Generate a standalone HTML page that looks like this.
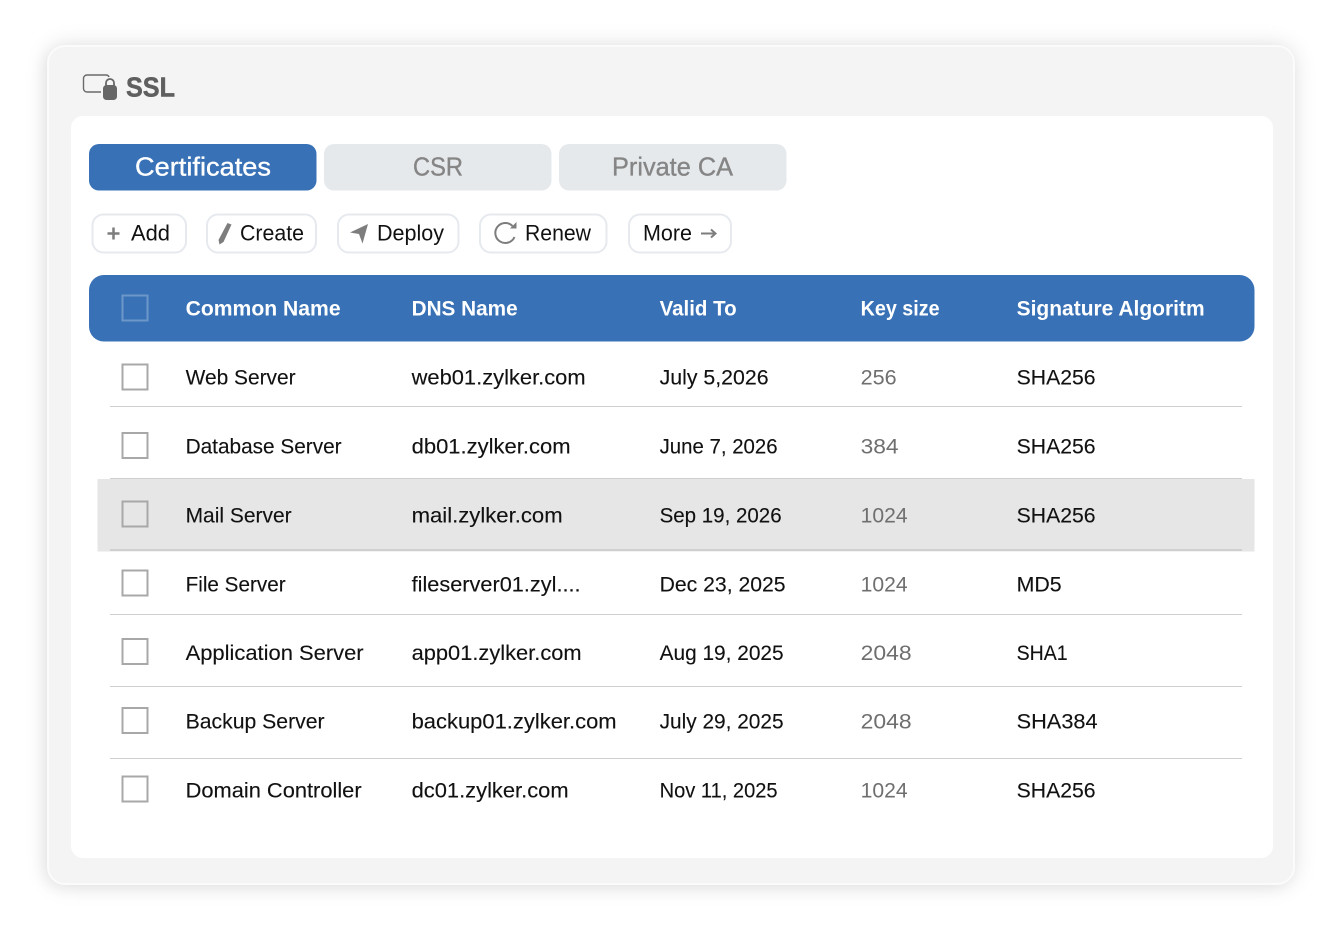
<!DOCTYPE html>
<html><head><meta charset="utf-8"><style>
html,body{margin:0;padding:0;background:#fff;width:1344px;height:930px;overflow:hidden}
svg{position:absolute;left:0;top:0}
text{font-family:"Liberation Sans",sans-serif}
.t{font-size:21px;fill:#111;stroke:#111;stroke-width:.12px;transform:translate(-.4px,-.7px)}
.k{font-size:21px;fill:#6f6f6f;transform:translate(-.4px,-.7px)}
.h{font-size:21px;font-weight:bold;fill:#fff;transform:translate(-.4px,-.3px)}
.b{font-size:22px;fill:#111;transform:translateY(-.5px)}
.tab{font-size:26px;stroke-width:.35px;transform:translateY(-.3px)}
</style></head><body>
<div style="position:absolute;left:47px;top:45px;width:1244px;height:836px;border:2px solid #fbfbfb;border-radius:18px;background:#f4f4f4;box-shadow:0 0 24px rgba(0,0,0,.11),-3px 3px 14px rgba(0,0,0,.05)"></div>
<div style="position:absolute;left:71px;top:116px;width:1202px;height:742px;border-radius:12px;background:#fff"></div>
<svg width="1344" height="930" viewBox="0 0 1344 930">
<path d="M101 92H87a3.500 3.500 0 0 1-3.500-3.500V78.500A3.500 3.500 0 0 1 87 75h19.500a3 3 0 0 1 2.500 2" fill="none" stroke="#6a6a6a" stroke-width="1.400"/>
<rect x="103" y="85" width="14" height="15" rx="3.500" fill="#666"/>
<path d="M106 86v-3a4 4 0 0 1 8 0v3" fill="none" stroke="#666" stroke-width="1.800"/>
<text x="126" y="96.500" font-size="28" font-weight="bold" fill="#5f5f5f" stroke="#5f5f5f" stroke-width=".5" textLength="49" lengthAdjust="spacingAndGlyphs">SSL</text>

<rect x="89" y="144" width="227.500" height="46.500" rx="10" fill="#3871b6"/>
<rect x="324" y="144" width="227.500" height="46.500" rx="10" fill="#e6e9ec"/>
<rect x="559" y="144" width="227.500" height="46.500" rx="10" fill="#e6e9ec"/>
<text class="tab" x="135" y="176" fill="#fff" stroke="#fff" textLength="136" lengthAdjust="spacingAndGlyphs">Certificates</text>
<text class="tab" x="413" y="176" fill="#858585" stroke="#858585" textLength="50" lengthAdjust="spacingAndGlyphs">CSR</text>
<text class="tab" x="612" y="176" fill="#858585" stroke="#858585" textLength="121" lengthAdjust="spacingAndGlyphs">Private CA</text>

<g fill="#fff" stroke="#e6e9ee" stroke-width="2">
<rect x="92.500" y="214.500" width="93.500" height="38" rx="11"/>
<rect x="207" y="214.500" width="109" height="38" rx="11"/>
<rect x="338" y="214.500" width="120.500" height="38" rx="11"/>
<rect x="480" y="214.500" width="126.500" height="38" rx="11"/>
<rect x="629" y="214.500" width="102" height="38" rx="11"/>
</g>
<path d="M113.500 227.500v12M107.500 233.500h12" stroke="#7d7d7d" stroke-width="2.500" fill="none"/>
<path d="M227.500 223l4 1.500-8 17.500-4 2.500-1-4.500z" fill="#7d7d7d"/>
<path d="M350 232.500l18-8.500-5.500 19.500-3.500-9.500z" fill="#7d7d7d"/>
<path d="M512.500 226a10 10 0 1 0 2 11" fill="none" stroke="#7d7d7d" stroke-width="2"/>
<path d="M516.500 222v6.500h-6.500z" fill="#7d7d7d"/>
<path d="M701 233.500h14M711 229.500l4.500 4-4.500 4" fill="none" stroke="#7d7d7d" stroke-width="2"/>
<text class="b" x="131" y="241" textLength="39" lengthAdjust="spacingAndGlyphs">Add</text>
<text class="b" x="240" y="241" textLength="64" lengthAdjust="spacingAndGlyphs">Create</text>
<text class="b" x="377" y="241" textLength="67" lengthAdjust="spacingAndGlyphs">Deploy</text>
<text class="b" x="525" y="241" textLength="66" lengthAdjust="spacingAndGlyphs">Renew</text>
<text class="b" x="643" y="241" textLength="49" lengthAdjust="spacingAndGlyphs">More</text>

<rect x="89" y="275" width="1165.500" height="66.500" rx="15" fill="#3871b6"/>
<rect x="122.500" y="295.500" width="25" height="25" fill="none" stroke="#6d96c9" stroke-width="2"/>
<text class="h" x="186" y="316" textLength="155" lengthAdjust="spacingAndGlyphs">Common Name</text>
<text class="h" x="412" y="316" textLength="106" lengthAdjust="spacingAndGlyphs">DNS Name</text>
<text class="h" x="660" y="316" textLength="77" lengthAdjust="spacingAndGlyphs">Valid To</text>
<text class="h" x="861" y="316" textLength="79" lengthAdjust="spacingAndGlyphs">Key size</text>
<text class="h" x="1017" y="316" textLength="188" lengthAdjust="spacingAndGlyphs">Signature Algoritm</text>

<rect x="97.500" y="479" width="1157" height="72.500" fill="#e6e6e6"/>
<g fill="#cfcfcf">
<rect x="110" y="406" width="1132" height="1"/>
<rect x="110" y="478" width="1132" height="1"/>
<rect x="110" y="549" width="1132" height="2"/>
<rect x="110" y="614" width="1132" height="1"/>
<rect x="110" y="686" width="1132" height="1"/>
<rect x="110" y="758" width="1132" height="1"/>
</g>
<g fill="none" stroke="#a8a8a8" stroke-width="2">
<rect x="122.500" y="364.500" width="25" height="25"/>
<rect x="122.500" y="433" width="25" height="25"/>
<rect x="122.500" y="501.500" width="25" height="25"/>
<rect x="122.500" y="570.500" width="25" height="25"/>
<rect x="122.500" y="639" width="25" height="25"/>
<rect x="122.500" y="708" width="25" height="25"/>
<rect x="122.500" y="776.500" width="25" height="25"/>
</g>

<text class="t" x="186" y="385" textLength="110" lengthAdjust="spacingAndGlyphs">Web Server</text>
<text class="t" x="412" y="385" textLength="174" lengthAdjust="spacingAndGlyphs">web01.zylker.com</text>
<text class="t" x="660" y="385" textLength="109" lengthAdjust="spacingAndGlyphs">July 5,2026</text>
<text class="k" x="861" y="385" textLength="36" lengthAdjust="spacingAndGlyphs">256</text>
<text class="t" x="1017" y="385" textLength="79" lengthAdjust="spacingAndGlyphs">SHA256</text>

<text class="t" x="186" y="454" textLength="156" lengthAdjust="spacingAndGlyphs">Database Server</text>
<text class="t" x="412" y="454" textLength="159" lengthAdjust="spacingAndGlyphs">db01.zylker.com</text>
<text class="t" x="660" y="454" textLength="118" lengthAdjust="spacingAndGlyphs">June 7, 2026</text>
<text class="k" x="861" y="454" textLength="38" lengthAdjust="spacingAndGlyphs">384</text>
<text class="t" x="1017" y="454" textLength="79" lengthAdjust="spacingAndGlyphs">SHA256</text>

<text class="t" x="186" y="523" textLength="106" lengthAdjust="spacingAndGlyphs">Mail Server</text>
<text class="t" x="412" y="523" textLength="151" lengthAdjust="spacingAndGlyphs">mail.zylker.com</text>
<text class="t" x="660" y="523" textLength="122" lengthAdjust="spacingAndGlyphs">Sep 19, 2026</text>
<text class="k" x="861" y="523" textLength="47" lengthAdjust="spacingAndGlyphs">1024</text>
<text class="t" x="1017" y="523" textLength="79" lengthAdjust="spacingAndGlyphs">SHA256</text>

<text class="t" x="186" y="592" textLength="100" lengthAdjust="spacingAndGlyphs">File Server</text>
<text class="t" x="412" y="592" textLength="169" lengthAdjust="spacingAndGlyphs">fileserver01.zyl....</text>
<text class="t" x="660" y="592" textLength="126" lengthAdjust="spacingAndGlyphs">Dec 23, 2025</text>
<text class="k" x="861" y="592" textLength="47" lengthAdjust="spacingAndGlyphs">1024</text>
<text class="t" x="1017" y="592" textLength="45" lengthAdjust="spacingAndGlyphs">MD5</text>

<text class="t" x="186" y="660.500" textLength="178" lengthAdjust="spacingAndGlyphs">Application Server</text>
<text class="t" x="412" y="660.500" textLength="170" lengthAdjust="spacingAndGlyphs">app01.zylker.com</text>
<text class="t" x="660" y="660.500" textLength="124" lengthAdjust="spacingAndGlyphs">Aug 19, 2025</text>
<text class="k" x="861" y="660.500" textLength="51" lengthAdjust="spacingAndGlyphs">2048</text>
<text class="t" x="1017" y="660.500" textLength="51" lengthAdjust="spacingAndGlyphs">SHA1</text>

<text class="t" x="186" y="729" textLength="139" lengthAdjust="spacingAndGlyphs">Backup Server</text>
<text class="t" x="412" y="729" textLength="205" lengthAdjust="spacingAndGlyphs">backup01.zylker.com</text>
<text class="t" x="660" y="729" textLength="124" lengthAdjust="spacingAndGlyphs">July 29, 2025</text>
<text class="k" x="861" y="729" textLength="51" lengthAdjust="spacingAndGlyphs">2048</text>
<text class="t" x="1017" y="729" textLength="81" lengthAdjust="spacingAndGlyphs">SHA384</text>

<text class="t" x="186" y="798" textLength="176" lengthAdjust="spacingAndGlyphs">Domain Controller</text>
<text class="t" x="412" y="798" textLength="157" lengthAdjust="spacingAndGlyphs">dc01.zylker.com</text>
<text class="t" x="660" y="798" textLength="118" lengthAdjust="spacingAndGlyphs">Nov 11, 2025</text>
<text class="k" x="861" y="798" textLength="47" lengthAdjust="spacingAndGlyphs">1024</text>
<text class="t" x="1017" y="798" textLength="79" lengthAdjust="spacingAndGlyphs">SHA256</text>
</svg>
</body></html>
